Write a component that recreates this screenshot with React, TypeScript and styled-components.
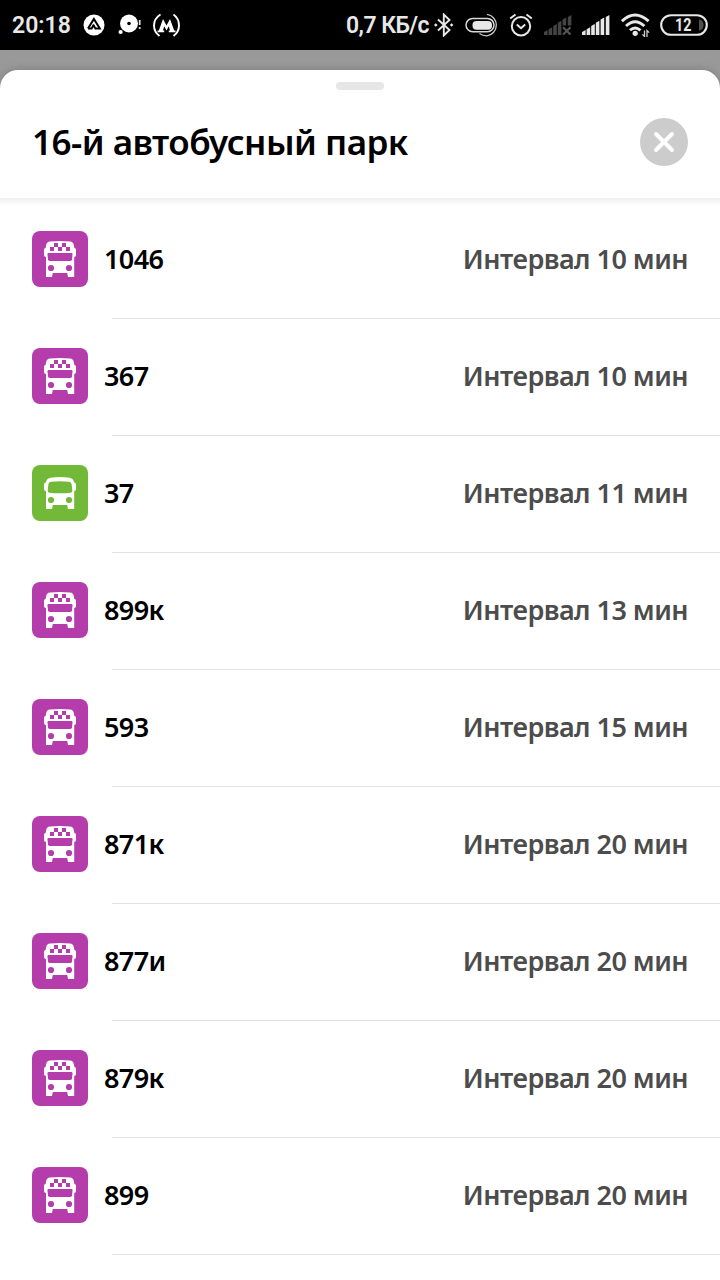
import React from 'react';
import styled, { createGlobalStyle } from 'styled-components';

const GlobalStyle = createGlobalStyle`
  * { box-sizing: border-box; }
  body { margin: 0; background: #999; overflow: hidden; }
`;

const Screen = styled.div`
  display: flex;
  flex-direction: column;
  width: 720px;
  height: 1280px;
  overflow: hidden;
  background: #999;
  font-family: 'Noto Sans', 'Open Sans', sans-serif;
`;

const StatusBar = styled.header`
  display: flex;
  flex: none;
  align-items: center;
  height: 50px;
  padding: 0 11px 0 12px;
  background: #000;
  color: #e8e8e8;
  font-family: Roboto, sans-serif;
`;

const StatusText = styled.span<{ $width: number; $gap: number; $spacing?: number }>`
  width: ${(p) => p.$width}px;
  margin-right: ${(p) => p.$gap}px;
  font-size: 23px;
  font-weight: 600;
  line-height: 30px;
  letter-spacing: ${(p) => p.$spacing ?? 0}px;
  white-space: nowrap;
  padding-top: 2px;
`;

const StatusIcon = styled.svg<{ $gap?: number }>`
  display: block;
  flex: none;
  margin-right: ${(p) => p.$gap ?? 0}px;
`;

const Spacer = styled.div`
  flex: 1;
`;

const Sheet = styled.main`
  display: flex;
  flex: 1;
  flex-direction: column;
  margin-top: 20px;
  border-radius: 18px 18px 0 0;
  background: #fff;
  box-shadow: 0 0 8px rgba(0, 0, 0, 0.2);
`;

const SheetHeader = styled.div`
  display: flex;
  flex: none;
  flex-direction: column;
  height: 128px;
  padding: 12px 32px 0;
`;

const Handle = styled.div`
  align-self: center;
  width: 48px;
  height: 8px;
  border-radius: 4px;
  background: #e6e6e6;
`;

const TitleRow = styled.div`
  display: flex;
  align-items: center;
  justify-content: space-between;
  height: 48px;
  margin-top: 28px;
`;

const Title = styled.h1`
  margin: 0;
  color: #000;
  font-size: 35px;
  font-weight: 600;
  line-height: 48px;
  letter-spacing: -0.52px;
  white-space: nowrap;
`;

const CloseButton = styled.button`
  display: flex;
  align-items: center;
  justify-content: center;
  width: 48px;
  height: 48px;
  padding: 0;
  border: 0;
  border-radius: 50%;
  background: #ccc;
`;

const HeaderShadow = styled.div`
  flex: none;
  height: 8px;
  margin-bottom: -4px;
  background: linear-gradient(#f0f0f0, #fff);
`;

const RouteList = styled.ul`
  margin: 0;
  padding: 0;
  list-style: none;
`;

const RouteRow = styled.li`
  display: flex;
  align-items: flex-start;
  height: 117px;
  padding: 29px 32px 0;
  background: linear-gradient(#e2e2e2, #e2e2e2) 112px 100% / 608px 1px no-repeat;
`;

const Badge = styled.div<{ $color: string }>`
  flex: none;
  width: 56px;
  height: 56px;
  border-radius: 8px;
  background: ${(p) => p.$color};
`;

const RouteName = styled.span`
  margin-left: 16px;
  color: #000;
  font-size: 27px;
  font-weight: 600;
  line-height: 56px;
  letter-spacing: -0.6px;
`;

const Interval = styled.span`
  margin-left: auto;
  color: #4c4c4c;
  font-size: 27px;
  font-weight: 600;
  line-height: 56px;
  letter-spacing: -0.54px;
  white-space: nowrap;
`;

const PURPLE = '#b43dab';
const GREEN = '#72b937';

const TaxiBus = () => (
  <svg width="56" height="56" viewBox="0 0 56 56">
    <path
      fill="#fff"
      d="M18 10.6Q28 9.4 38 10.6Q41.2 11 41.8 14L42.4 17Q44 17.2 44 18.8V24Q44 26 42.2 26V46H36L35.2 42H20.8L20 46H14V26Q12 26 12 24V18.8Q12 17.2 13.6 17L14.2 14Q14.8 11 18 10.6Z"
    />
    <g fill={PURPLE}>
      <path d="M22 12h4v4h-4zM30 12h4v4h-4zM18 16h4v4h-4zM26 16h4v4h-4zM34 16h4v4h-4z" />
      <path d="M16.6 22H39.4Q40.6 22 40.5 23.2L40 28.6Q39.8 30 38.4 30H17.6Q16.2 30 16 28.6L15.5 23.2Q15.4 22 16.6 22Z" />
      <circle cx="19" cy="37" r="3.1" />
      <circle cx="37" cy="37" r="3.1" />
    </g>
  </svg>
);

const CityBus = () => (
  <svg width="56" height="56" viewBox="0 0 56 56">
    <path
      fill="#fff"
      d="M18.5 12.8Q28 11.2 37.5 12.8Q40.8 13.4 41.6 15.8L42.2 17.4Q44 17.6 44 19.4V24Q44 26 42.2 26V44H36L35.2 40H20.8L20 44H14V26Q12 26 12 24V19.4Q12 17.6 13.8 17.4L14.4 15.8Q15.2 13.4 18.5 12.8Z"
    />
    <g fill={GREEN}>
      <path d="M19 16.8Q28 15.8 37 16.8Q39.2 17 39.6 19L40.3 25.6Q40.4 27.4 38.6 27.7Q28 29 17.4 27.7Q15.6 27.4 15.7 25.6L16.4 19Q16.8 17 19 16.8Z" />
      <circle cx="19" cy="35" r="3.1" />
      <circle cx="37" cy="35" r="3.1" />
    </g>
  </svg>
);

type Route = { name: string; minutes: number; city?: boolean };

const routes: Route[] = [
  { name: '1046', minutes: 10 },
  { name: '367', minutes: 10 },
  { name: '37', minutes: 11, city: true },
  { name: '899к', minutes: 13 },
  { name: '593', minutes: 15 },
  { name: '871к', minutes: 20 },
  { name: '877и', minutes: 20 },
  { name: '879к', minutes: 20 },
  { name: '899', minutes: 20 },
];

const signalBars = [
  [0, 16, 3.6, 4],
  [4.6, 13.2, 3.6, 6.8],
  [9.2, 10, 3.6, 10],
  [13.8, 6.8, 3.6, 13.2],
  [18.6, 3.4, 3.6, 16.6],
  [23.8, 1, 3.6, 19],
];

const Status = () => (
  <StatusBar>
    <StatusText $width={58} $gap={13}>20:18</StatusText>
    <StatusIcon width="22" height="22" viewBox="0 0 22 22" $gap={13}>
      <circle cx="11" cy="11" r="10.5" fill="#fff" />
      <path d="M5 14.6L10.9 5L16.8 14.6H12.4L10.6 11.2M5 14.6H8.6L10.9 10.4" fill="none" stroke="#000" strokeWidth="2" />
    </StatusIcon>
    <StatusIcon width="24" height="22" viewBox="0 0 24 22" $gap={11}>
      <circle cx="11" cy="9.5" r="9" fill="#fff" />
      <circle cx="11" cy="9.5" r="1.8" fill="#000" />
      <circle cx="2.6" cy="18" r="2.1" fill="#fff" />
      <path d="M21.7 6v5M21.7 13v2" stroke="#ddd" strokeWidth="1.8" />
    </StatusIcon>
    <StatusIcon width="28" height="24" viewBox="0 0 28 24">
      <path d="M7.5 1.5Q1 5.5 1 12.5Q1 19 6.5 23M20.5 1.5Q26 5.5 26 12.5Q26 19 20.5 23" fill="none" stroke="#fff" strokeWidth="1.9" />
      <path d="M4.5 17.6H5.8L10 6L13.5 12.4L17 6L21.2 17.6H22.5V19.2H15.8V17.6H17L15.8 13.2L13.5 17.6L11.2 13.2L10 17.6H11.2V19.2H4.5Z" fill="#fff" />
    </StatusIcon>
    <Spacer />
    <StatusText $width={83} $gap={5} $spacing={-0.55}>0,7 КБ/с</StatusText>
    <StatusIcon width="20" height="24" viewBox="0 0 20 24" $gap={11}>
      <path d="M4 6.5L15.5 17L9.800 22.5V1.5L15.5 7L4 17.5" fill="none" stroke="#e8e8e8" strokeWidth="1.9" />
      <path d="M0 12l1.800-1.800l1.800 1.800l-1.800 1.800zM15.800 12l1.800-1.800l1.800 1.800l-1.800 1.800z" fill="#e8e8e8" />
    </StatusIcon>
    <StatusIcon width="34" height="24" viewBox="0 0 34 24" $gap={10}>
      <rect x="1" y="5.4" width="28" height="13.4" rx="6.7" fill="none" stroke="#d8d8d8" strokeWidth="1.5" />
      <rect x="7.5" y="8" width="19.5" height="8.8" rx="4" fill="#e8e8e8" />
      <path d="M22 1.4A10.8 10.8 0 0 1 22 22.8Q18 23 14.5 20.5" fill="none" stroke="#c8c8c8" strokeWidth="1.3" />
    </StatusIcon>
    <StatusIcon width="24" height="24" viewBox="0 0 24 24" $gap={11}>
      <circle cx="12" cy="13.2" r="9.2" fill="none" stroke="#e8e8e8" strokeWidth="2" />
      <path d="M1.2 5.5L6.5 1.5M22.8 5.5L17.5 1.5M7.8 11.5L12 15.2L16.2 11.5" fill="none" stroke="#e8e8e8" strokeWidth="2" />
    </StatusIcon>
    <StatusIcon width="28" height="20" viewBox="0 0 28 20" $gap={10}>
      {signalBars.slice(0, 4).map(([x, y, w, h]) => (
        <path key={x} d={`M${x} ${y + 1}L${x + w} ${y - 1}V${y + h}H${x}Z`} fill="#444" />
      ))}
      <path d="M18.6 4.4l3.6-2V10.5h-3.6zM23.8 2l3.6-2v10.5h-3.6z" fill="#444" />
      <path d="M19 12.3L26.5 19.5M26.5 12.3L19 19.5" stroke="#555" strokeWidth="2.2" />
    </StatusIcon>
    <StatusIcon width="28" height="20" viewBox="0 0 28 20" $gap={11}>
      {signalBars.map(([x, y, w, h]) => (
        <path key={x} d={`M${x} ${y + 1}L${x + w} ${y - 1}V${y + h}H${x}Z`} fill="#e8e8e8" />
      ))}
    </StatusIcon>
    <StatusIcon width="29" height="24" viewBox="0 0 29 24" $gap={10}>
      <g fill="none" stroke="#e8e8e8" strokeWidth="2.9">
        <path d="M0.9 8.2Q14 -4 27.6 8.2" />
        <path d="M5 13Q14 4.5 23.4 13" />
        <path d="M9 17.3Q14 12.5 19.5 17.3" />
      </g>
      <circle cx="14.2" cy="20.3" r="2.6" fill="#e8e8e8" />
      <path d="M23.5 17.5V23.5L21.4 21.4M26 24V17.5L28.1 19.6" fill="none" stroke="#ccc" strokeWidth="1.3" />
    </StatusIcon>
    <StatusIcon width="49" height="22" viewBox="0 0 49 22">
      <rect x="1.2" y="1.2" width="45.6" height="19.6" rx="9.8" fill="none" stroke="#e8e8e8" strokeWidth="2.1" />
      <path d="M39 5.5H40Q43.500 7 43.500 11Q43.500 15 40 16.500H39Z" fill="#505050" />
      <text
        x="15"
        y="17.2"
        textLength="16.5"
        lengthAdjust="spacingAndGlyphs"
        fontFamily="Roboto, sans-serif"
        fontSize="17.5"
        fontWeight="700"
        fill="#e8e8e8"
      >
        12
      </text>
    </StatusIcon>
  </StatusBar>
);

export default function App() {
  return (
    <Screen>
      <GlobalStyle />
      <Status />
      <Sheet>
        <SheetHeader>
          <Handle />
          <TitleRow>
            <Title>16-й автобусный парк</Title>
            <CloseButton aria-label="Закрыть">
              <svg width="24" height="24" viewBox="0 0 24 24">
                <path d="M4 4L20 20M20 4L4 20" stroke="#fff" strokeWidth="4" strokeLinecap="round" />
              </svg>
            </CloseButton>
          </TitleRow>
        </SheetHeader>
        <HeaderShadow />
        <RouteList>
          {routes.map((route) => (
            <RouteRow key={route.name}>
              <Badge $color={route.city ? GREEN : PURPLE}>{route.city ? <CityBus /> : <TaxiBus />}</Badge>
              <RouteName>{route.name}</RouteName>
              <Interval>{`Интервал ${route.minutes} мин`}</Interval>
            </RouteRow>
          ))}
        </RouteList>
      </Sheet>
    </Screen>
  );
}
